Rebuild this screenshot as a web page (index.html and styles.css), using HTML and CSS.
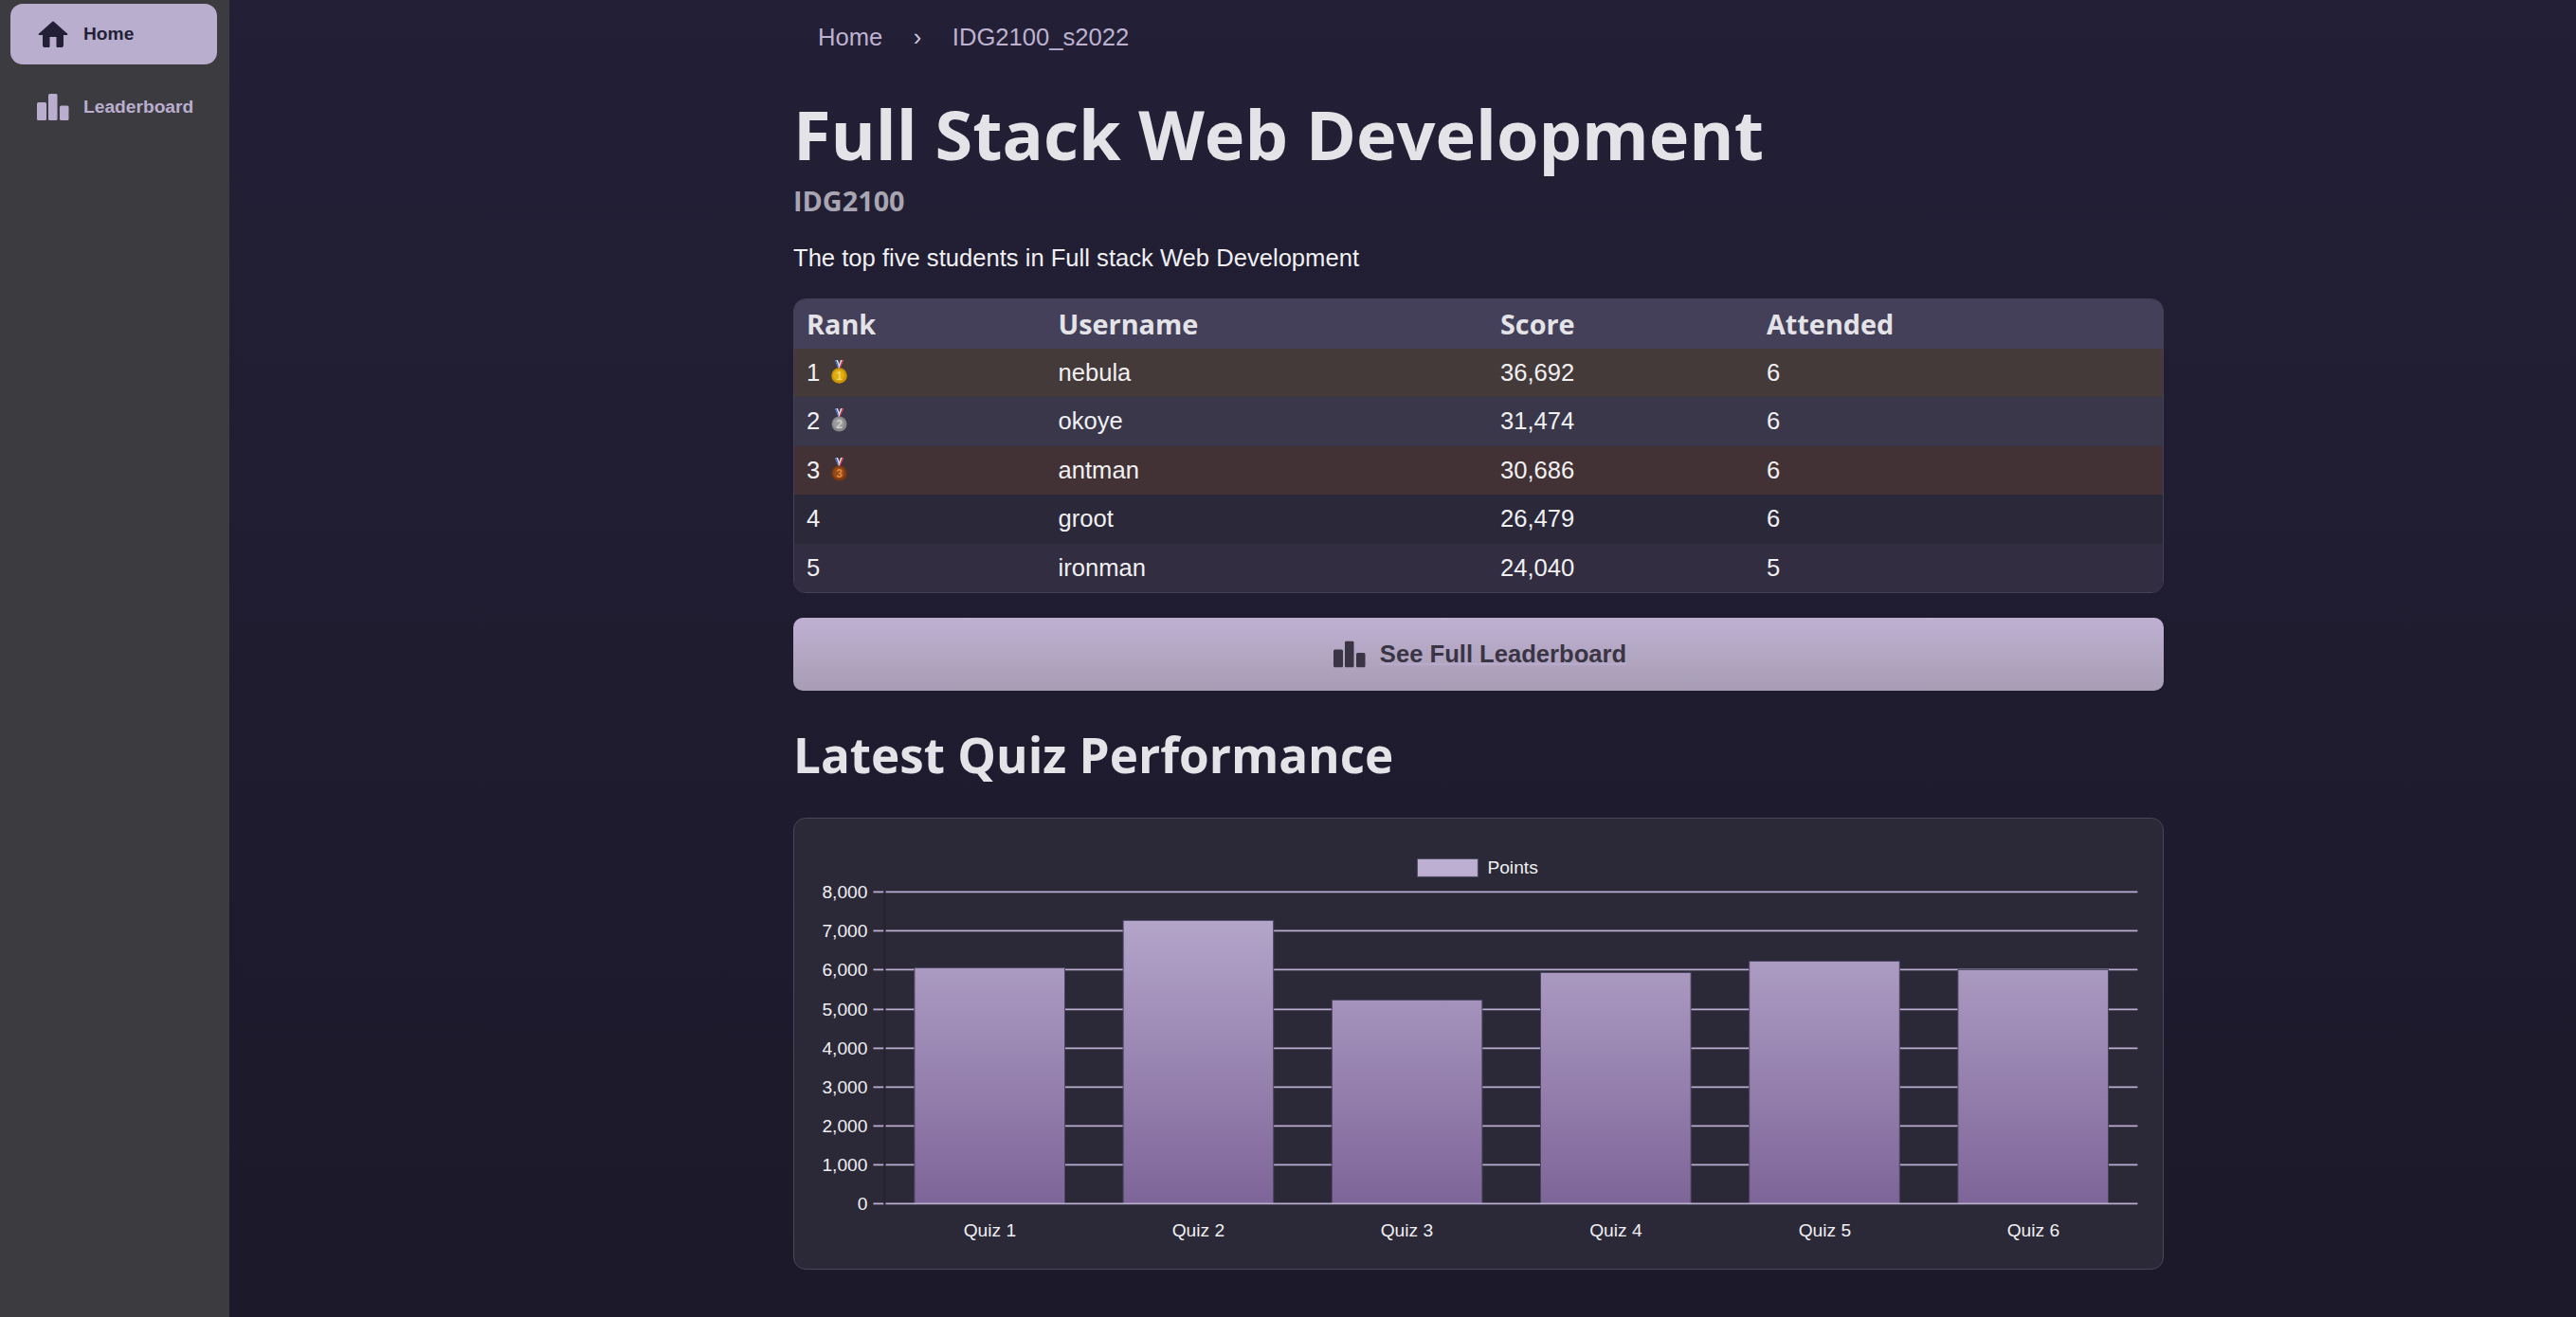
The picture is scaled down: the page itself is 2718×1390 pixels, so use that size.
FILE: index.html
```html
<!DOCTYPE html>
<html lang="en">
<head>
  <meta charset="UTF-8" />
  <title>Full Stack Web Development</title>
  <link rel="stylesheet" href="styles.css">
</head>
<body>

  <!-- Side navigation -->
  <nav class="sidebar">
    <a class="nav-item active" href="#">
      <svg class="nav-icon" viewBox="0 0 34 28"><path d="M17 0.5a1.5 1.5 0 0 1 1 .4L32 13.4c.8.8.3 1.6-.7 1.6H28v11a2 2 0 0 1-2 2h-4.500a1 1 0 0 1-1-1V17h-7v10a1 1 0 0 1-1 1H8a2 2 0 0 1-2-2V15H2.700c-1 0-1.500-.8-.7-1.600L16 .9a1.500 1.500 0 0 1 1-.4z"/></svg>
      <span>Home</span>
    </a>
    <a class="nav-item" href="#">
      <svg class="nav-icon" viewBox="0 0 34 28"><use href="#bars"/></svg>
      <span>Leaderboard</span>
    </a>
  </nav>

  <main class="content">
    <ul class="breadcrumb">
      <li>Home</li>
      <li class="sep">›</li>
      <li>IDG2100_s2022</li>
    </ul>

    <h1>Full Stack Web Development</h1>
    <h2 class="code">IDG2100</h2>
    <p class="lead">The top five students in Full stack Web Development</p>

    <div class="table-wrap">
      <table class="scores">
        <colgroup>
          <col class="c-rank"><col class="c-user"><col class="c-score"><col>
        </colgroup>
        <thead>
          <tr><th>Rank</th><th>Username</th><th>Score</th><th>Attended</th></tr>
        </thead>
        <tbody>
          <tr class="gold">
            <td>1 <svg class="medal" viewBox="0 0 17 25"><use href="#ribbon"/><circle cx="8.500" cy="16.500" r="8.300" fill="#c99504"/><circle cx="8" cy="16" r="6" fill="#e0ae10"/><text x="8.500" y="20.500" class="medal-num" fill="#f4d468">1</text></svg></td>
            <td>nebula</td><td>36,692</td><td>6</td>
          </tr>
          <tr class="silver">
            <td>2 <svg class="medal" viewBox="0 0 17 25"><use href="#ribbon"/><circle cx="8.500" cy="16.500" r="8" fill="#858587"/><circle cx="8" cy="16" r="6" fill="#9a9a9c"/><text x="8.500" y="20.500" class="medal-num" fill="#cdcdcf">2</text></svg></td>
            <td>okoye</td><td>31,474</td><td>6</td>
          </tr>
          <tr class="bronze">
            <td>3 <svg class="medal" viewBox="0 0 17 25"><use href="#ribbon"/><circle cx="8.500" cy="16.500" r="8" fill="#7d3812"/><circle cx="8" cy="16" r="6" fill="#964a1a"/><text x="8.500" y="20.500" class="medal-num" fill="#e08a3a">3</text></svg></td>
            <td>antman</td><td>30,686</td><td>6</td>
          </tr>
          <tr class="plain">
            <td>4</td><td>groot</td><td>26,479</td><td>6</td>
          </tr>
          <tr class="alt">
            <td>5</td><td>ironman</td><td>24,040</td><td>5</td>
          </tr>
        </tbody>
      </table>
    </div>

    <a class="full-btn" href="#">
      <svg class="btn-icon" viewBox="0 0 34 28"><use href="#bars"/></svg>
      <span>See Full Leaderboard</span>
    </a>

    <h2 class="section">Latest Quiz Performance</h2>

    <!-- Chart drawn in page coordinates, same as a canvas would be -->
    <div class="chart-card">
      <svg class="chart" width="1442.800" height="475.800" viewBox="838.600 863.600 1442.800 475.800">
        <defs>
          <linearGradient id="barFill" gradientUnits="userSpaceOnUse" x1="0" y1="930" x2="0" y2="1270">
            <stop offset="0" stop-color="#bbadd0"/>
            <stop offset="1" stop-color="#7e6599"/>
          </linearGradient>
        </defs>

        <rect class="legend-box" x="1496" y="906" width="64" height="19"/>
        <text class="lbl" x="1570" y="922">Points</text>

        <g class="grid">
          <line x1="935" x2="2256" y1="941" y2="941"/>
          <line x1="935" x2="2256" y1="982" y2="982"/>
          <line x1="935" x2="2256" y1="1023" y2="1023"/>
          <line x1="935" x2="2256" y1="1065" y2="1065"/>
          <line x1="935" x2="2256" y1="1106" y2="1106"/>
          <line x1="935" x2="2256" y1="1147" y2="1147"/>
          <line x1="935" x2="2256" y1="1188" y2="1188"/>
          <line x1="935" x2="2256" y1="1229" y2="1229"/>
        </g>
        <g class="ticks">
          <line x1="922" x2="933" y1="941" y2="941"/>
          <line x1="922" x2="933" y1="982" y2="982"/>
          <line x1="922" x2="933" y1="1023" y2="1023"/>
          <line x1="922" x2="933" y1="1065" y2="1065"/>
          <line x1="922" x2="933" y1="1106" y2="1106"/>
          <line x1="922" x2="933" y1="1147" y2="1147"/>
          <line x1="922" x2="933" y1="1188" y2="1188"/>
          <line x1="922" x2="933" y1="1229" y2="1229"/>
          <line x1="922" x2="933" y1="1270" y2="1270"/>
        </g>
        <line class="y-axis" x1="934" x2="934" y1="940" y2="1270"/>

        <g class="bars">
          <rect x="965.500" y="1021" width="158.600" height="249"/>
          <rect x="1185.700" y="971" width="158.600" height="299"/>
          <rect x="1405.900" y="1055" width="158.600" height="215"/>
          <rect x="1626.100" y="1026" width="158.600" height="244"/>
          <rect x="1846.300" y="1014" width="158.600" height="256"/>
          <rect x="2066.500" y="1023" width="158.600" height="247"/>
        </g>
        <line class="baseline" x1="935" x2="2256" y1="1270" y2="1270"/>

        <g class="lbl end">
          <text x="916" y="948">8,000</text>
          <text x="916" y="989">7,000</text>
          <text x="916" y="1030">6,000</text>
          <text x="916" y="1072">5,000</text>
          <text x="916" y="1113">4,000</text>
          <text x="916" y="1154">3,000</text>
          <text x="916" y="1195">2,000</text>
          <text x="916" y="1236">1,000</text>
          <text x="916" y="1277">0</text>
        </g>
        <g class="lbl mid">
          <text x="1045" y="1305">Quiz 1</text>
          <text x="1265" y="1305">Quiz 2</text>
          <text x="1485" y="1305">Quiz 3</text>
          <text x="1705.500" y="1305">Quiz 4</text>
          <text x="1926" y="1305">Quiz 5</text>
          <text x="2146" y="1305">Quiz 6</text>
        </g>
      </svg>
    </div>
  </main>

  <!-- shared icon parts -->
  <svg class="defs" width="0" height="0">
    <symbol id="bars" viewBox="0 0 34 28">
      <rect x="0" y="9" width="10" height="19" rx="1.500"/>
      <rect x="12" y="0" width="9.500" height="28" rx="1.500"/>
      <rect x="24" y="12.500" width="9.500" height="15.500" rx="1.500"/>
    </symbol>
    <symbol id="ribbon" viewBox="0 0 17 25">
      <path d="M4 0h3l2.500 7-1.500 3z" fill="#e8e8f0"/>
      <path d="M4 0h1.500l3 8-.5 2z" fill="#3f62c8"/>
      <path d="M13 0h-3l-2.500 7 1 3z" fill="#e8e8f0"/>
      <path d="M13 0h-1.500l-3 8 .5 2z" fill="#d8344a"/>
    </symbol>
  </svg>

</body>
</html>
```

FILE: styles.css
```css
html, body {
  margin: 0;
  padding: 0;
  height: 100%;
}
body {
  display: flex;
  overflow: hidden;
  font-family: "Liberation Sans", Arial, sans-serif;
  font-size: 25.6px;
  color: #f0f0f2;
  background: linear-gradient(#231f36, #1c192a);
}
a {
  color: inherit;
  text-decoration: none;
}
.defs {
  position: absolute;
}

/* sidebar */
.sidebar {
  width: 242px;
  flex: none;
  box-sizing: border-box;
  height: 1390px;
  padding: 4px 13px 0 11px;
  background: #3c3b40;
}
.nav-item {
  display: flex;
  align-items: center;
  gap: 15px;
  height: 64px;
  margin-bottom: 13px;
  padding-left: 28px;
  border-radius: 13px;
  font-size: 19.2px;
  font-weight: bold;
  color: #baaecf;
  fill: #baaecf;
}
.nav-item.active {
  background: #baaecf;
  color: #231f36;
  fill: #231f36;
}
.nav-icon {
  width: 34px;
  height: 28px;
}

/* main column */
.content {
  width: 1446px;
  margin-left: 595px;
  flex: none;
}
.breadcrumb {
  display: flex;
  gap: 32.500px;
  list-style: none;
  margin: 0;
  padding: 20px 0 0 26px;
  line-height: 38px;
  color: #bdb2cf;
}
.breadcrumb .sep {
  color: #d0c6de;
}
h1 {
  margin: 37px 0 0;
  font-family: "Open Sans", sans-serif;
  font-size: 72px;
  font-weight: bold;
  line-height: 92px;
  color: #e4e4e8;
}
.code {
  margin: 6px 0 0;
  font-family: "Open Sans", sans-serif;
  font-size: 28.8px;
  font-weight: bold;
  line-height: 38px;
  color: #a8a6b2;
}
.lead {
  margin: 22px 0 0;
  line-height: 38px;
}

/* top five table */
.table-wrap {
  margin-top: 24px;
  border: 1.6px solid #44405a;
  border-radius: 13px;
  overflow: hidden;
}
.scores {
  width: 100%;
  table-layout: fixed;
  border-collapse: collapse;
}
.c-rank { width: 265.500px; }
.c-user { width: 466.500px; }
.c-score { width: 281px; }
.scores th, .scores td {
  height: 51.500px;
  padding: 0 0 0 13px;
  text-align: left;
}
.scores th {
  background: #45405a;
  font-family: "Open Sans", sans-serif;
  font-size: 28.8px;
  font-weight: bold;
  color: #e4e4e8;
}
.gold td { background: #453a3a; }
.silver td { background: #3a374a; }
.bronze td { background: #433235; }
.plain td { background: #2b2839; }
.alt td { background: #322d41; }
.medal {
  width: 17px;
  height: 25px;
  margin-left: 5px;
  vertical-align: -3px;
}
.medal-num {
  font-size: 12px;
  font-weight: bold;
  text-anchor: middle;
}

/* button */
.full-btn {
  display: flex;
  align-items: center;
  justify-content: center;
  gap: 15px;
  box-sizing: border-box;
  height: 77px;
  margin-top: 25.600px;
  padding-left: 3px;
  border-radius: 10px;
  background: linear-gradient(#bfb0d2, #a79db4);
  font-weight: bold;
  color: #3a3545;
  fill: #3a3545;
}
.full-btn span {
  text-decoration: underline;
  text-decoration-color: #b8aacb;
  text-decoration-thickness: 2px;
}
.btn-icon {
  width: 34px;
  height: 29px;
}

.section {
  margin: 32px 0 0;
  font-family: "Open Sans", sans-serif;
  font-size: 51.200px;
  font-weight: bold;
  line-height: 70px;
  color: #e4e4e8;
}

/* chart */
.chart-card {
  margin-top: 32px;
  border: 1.6px solid #4a4658;
  border-radius: 13px;
  background: #2b2838;
}
.chart {
  display: block;
}
.grid line, .baseline, .ticks line {
  stroke: #b9aecd;
  stroke-width: 1.8;
}
.y-axis {
  stroke: #25222f;
  stroke-width: 1.6;
}
.bars rect {
  fill: url(#barFill);
  stroke: #4a4560;
  stroke-width: 1;
}
.legend-box {
  fill: #bcafd2;
  stroke: #4f4a5e;
  stroke-width: 1;
}
.lbl {
  font-size: 19.200px;
  fill: #f0f0f2;
}
.lbl.end { text-anchor: end; }
.lbl.mid { text-anchor: middle; }
```
